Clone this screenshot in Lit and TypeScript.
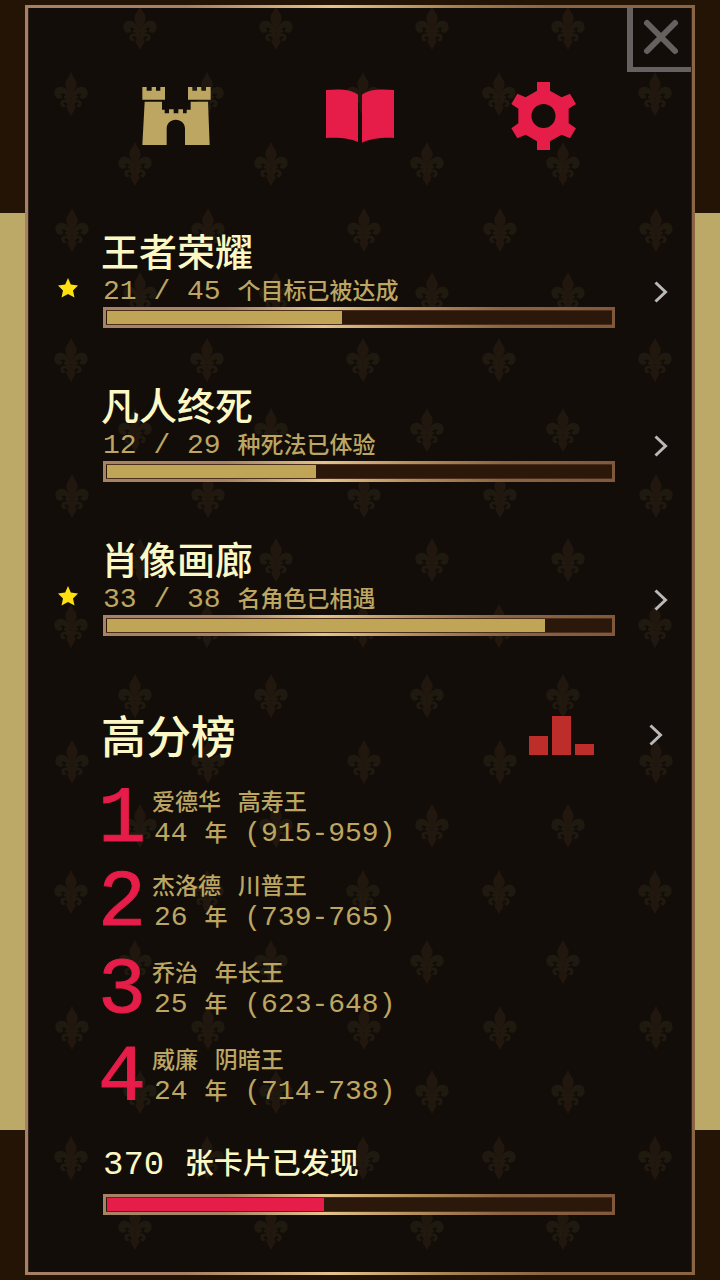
import { LitElement, html, css, svg, nothing } from "lit";
import { customElement, property } from "lit/decorators.js";

interface Goal {
  title: string;
  done: number;
  total: number;
  caption: string;
  starred: boolean;
}

interface Reign {
  king: string;
  epithet: string;
  years: number;
  from: number;
  to: number;
}

const GOALS: Goal[] = [
  { title: "王者荣耀", done: 21, total: 45, caption: "个目标已被达成", starred: true },
  { title: "凡人终死", done: 12, total: 29, caption: "种死法已体验", starred: false },
  { title: "肖像画廊", done: 33, total: 38, caption: "名角色已相遇", starred: true },
];

const REIGNS: Reign[] = [
  { king: "爱德华", epithet: "高寿王", years: 44, from: 915, to: 959 },
  { king: "杰洛德", epithet: "川普王", years: 26, from: 739, to: 765 },
  { king: "乔治", epithet: "年长王", years: 25, from: 623, to: 648 },
  { king: "威廉", epithet: "阴暗王", years: 24, from: 714, to: 738 },
];

const chevron = html`<svg width="14" height="22" viewBox="0 0 14 22" aria-hidden="true">
  <path d="M1.500 1.500 11.500 11 1.500 20.500" fill="none" stroke="#b9b9b9" stroke-width="3" />
</svg>`;

// Spots of the fleurs-de-lis inside one 292 x 266 tile.
const FLEURS = [
  [111, 24], [247, 24], [42, 90], [178, 90],
  [106, 160], [242, 160], [43, 226], [179, 226],
];

@customElement("fleur-backdrop")
export class FleurBackdrop extends LitElement {
  static styles = css`
    :host { display: block; }
    svg { display: block; width: 100%; height: 100%; }
  `;
  render() {
    return html`<svg aria-hidden="true">
      <defs>
        <g id="half">
          <path d="M1 2.500C2 -2 5 -6 9 -7C14 -8 17 -4 16.500 0C16 4 12 6 9.500 4C8 2.500 9 0.500 11 1C10 -1.500 6 -1 5 2C4.500 3.500 4 5 5.500 6C8 5 11 7 10.500 10C10 14 6 14 5 11C6.500 11.500 8 10.500 7.500 9C6 7 3 9 3 12L1 8Z" />
        </g>
        <g id="fleur">
          <g fill="#1f190f">
            <use href="#half" />
            <use href="#half" transform="scale(-1 1)" />
            <path d="M-7 2H7V4.500H-7Z" />
          </g>
          <g fill="#21170f">
            <path d="M0 -22C2 -16 6 -14 5.500 -9C5 -5 2 -3 1.500 4H-1.500C-2 -3 -5 -5 -5.500 -9C-6 -14 -2 -16 0 -22Z" />
            <path d="M-1.500 5H1.500C1.500 10 4 11 4.500 13C4 16 1.500 18 0 22C-1.500 18 -4 16 -4.500 13C-4 11 -1.500 10 -1.500 5Z" />
          </g>
        </g>
        <pattern id="tile" y="-4" width="292" height="266" patternUnits="userSpaceOnUse">
          ${FLEURS.map(([x, y]) => svg`<use href="#fleur" x=${x} y=${y} />`)}
        </pattern>
      </defs>
      <rect width="100%" height="100%" fill="url(#tile)" />
    </svg>`;
  }
}

@customElement("meter-bar")
export class MeterBar extends LitElement {
  @property({ type: Number }) value = 0;
  @property() label = "";
  @property() tone = "gold";

  static styles = css`
    :host { display: block; }
    .frame {
      padding: 3px;
      background: linear-gradient(90deg, #a68362 0%, #a68362 24%, #e3c48c 43%, #b08a58 62%, #8b6542 78%, #80593c 100%);
    }
    .track {
      box-sizing: border-box;
      height: 15px;
      padding: 0 1px;
      background: #2c180b;
      border: 1px solid #4b2f1c;
      border-width: 1px 0;
    }
    .fill { height: 13px; background: #c1a556; }
    .crimson { background: #e61c49; }
  `;
  render() {
    return html`<div class="frame" role="progressbar" aria-label=${this.label} aria-valuenow=${Math.round(this.value)}>
      <div class="track"><div class="fill ${this.tone}" style="width:${this.value}%"></div></div>
    </div>`;
  }
}

@customElement("app-root")
export class AppRoot extends LitElement {
  static styles = css`
    :host {
      display: flex;
      box-sizing: border-box;
      min-height: 100vh;
      padding: 5px 25px;
      background: linear-gradient(#241405 213px, #bca867 213px, #bca867 calc(100% - 150px), #241405 calc(100% - 150px));
      font-family: "Noto Sans CJK SC", sans-serif;
      font-weight: 500;
      color: #bca662;
    }
    .frame {
      flex: 1;
      display: flex;
      padding: 3px;
      background: linear-gradient(90deg, #a68064 0%, #a68064 24%, #e3c48c 46%, #a58050 64%, #8b6444 78%, #8b6444 100%);
    }
    .panel {
      position: relative;
      flex: 1;
      display: flex;
      flex-direction: column;
      background: #120d08;
      border: 1px solid #33231a;
      border-width: 0 1px;
    }
    .backdrop { position: absolute; inset: 0; }
    .close {
      position: absolute;
      top: 0;
      right: 0;
      box-sizing: border-box;
      width: 64px;
      height: 64px;
      padding: 0;
      background: #120d08;
      border: solid #666161;
      border-width: 0 0 5px 6px;
      border-radius: 0;
    }
    .close svg, .tab svg, .mark svg, .arrow svg, .chart { display: block; }
    .body { position: relative; padding: 74px 23px 56px 29px; }
    .tabs { display: flex; justify-content: space-between; padding: 0 90px 0 84px; margin-bottom: 78px; }
    .tab { width: 68px; height: 68px; padding: 0; border: 0; background: none; color: #e61c49; }
    .current { color: #bca662; }
    a { color: inherit; text-decoration: none; }
    .goal {
      display: grid;
      grid-template-columns: 45px 1fr 53px;
      height: 100px;
      margin-bottom: 54px;
    }
    .mark { padding-top: 50px; }
    .arrow { padding-top: 53px; justify-self: end; }
    h2 { margin: 0 0 0 -2px; font-weight: 500; font-size: 38px; line-height: 44px; color: #fbf8c5; }
    .line { margin: 0; font-size: 23px; line-height: 31px; white-space: pre; }
    .caption { line-height: 35px; }
    .line, .caption { overflow: visible; }
    .num { font-family: "Liberation Mono", monospace; font-weight: 400; font-size: 28px; line-height: 1px; }
    .scores {
      display: flex;
      align-items: center;
      margin: 0 5px 5px 45px;
      height: 90px;
    }
    .scores h2 { flex: 1; font-size: 45px; line-height: 60px; }
    .scores .arrow { padding: 0; margin-left: 55px; }
    ol { list-style: none; margin: 0 0 0 40px; padding: 0; }
    li { display: flex; gap: 6px; height: 62px; margin-bottom: 25px; }
    li:first-child { margin-bottom: 22px; }
    .rank {
      width: 48px;
      font: 400 80px/70px "Liberation Mono", monospace;
      color: #e61c49;
      -webkit-text-stroke: 1px #e61c49;
    }
    .years { padding-left: 2px; }
    .found { margin: 36px 53px 0 45px; }
    .cards { margin: 0 0 13px; height: 40px; font-size: 29px; line-height: 40px; color: #fbf8c5; white-space: pre; }
    .cards .num { font-size: 34px; }
  `;

  private goal(g: Goal) {
    return html`<a class="goal" href="#">
      <span class="mark">
        ${g.starred
          ? html`<svg width="20" height="20" viewBox="0 0 20 20" aria-hidden="true">
              <path d="M10 0 12.800 6.500 20 7.500 15 12.500 16.500 19.500 10 16 3.500 19.500 5 12.500 0 7.500 7.200 6.500Z" fill="#ffdf10" />
            </svg>`
          : nothing}
      </span>
      <div>
        <h2>${g.title}</h2>
        <p class="line caption"><span class="num">${g.done} / ${g.total} </span>${g.caption}</p>
        <meter-bar .value=${(g.done / g.total) * 100} .label=${g.title}></meter-bar>
      </div>
      <span class="arrow">${chevron}</span>
    </a>`;
  }

  private reign(r: Reign, i: number) {
    return html`<li>
      <span class="rank">${i + 1}</span>
      <div>
        <p class="line">${r.king}<span class="num"> </span>${r.epithet}</p>
        <p class="line years"><span class="num">${r.years} </span>年<span class="num"> (${r.from}-${r.to})</span></p>
      </div>
    </li>`;
  }

  render() {
    return html`<div class="frame"><main class="panel">
      <fleur-backdrop class="backdrop"></fleur-backdrop>
      <div class="body">
        <nav class="tabs">
          <button class="tab current" aria-label="城堡">
            <svg width="68" height="68" viewBox="426 246 204 204" overflow="visible" fill="currentColor">
              <path d="M427 261H440V272H455V261H468V272H481V261H495V299H427Z" />
              <path d="M564 261H577V272H591V261H604V272H618V261H632V299H564Z" />
              <path d="M434 305H486V329H494V340H507V328H521V340H535V328H549V340H560V329H572V305H624L629 435H555V386C555 370 543 359 527 359C512 359 500 370 500 386V435H427Z" />
            </svg>
          </button>
          <button class="tab" aria-label="书">
            <svg width="68" height="68" viewBox="978 246 204 204" fill="currentColor">
              <path d="M978 270C1015 267 1050 266 1074 284V426C1050 416 1020 412 978 414Z" />
              <path d="M1182 270C1145 267 1110 266 1086 284V428C1110 418 1140 412 1182 414Z" />
            </svg>
          </button>
          <button class="tab" aria-label="设置">
            <svg width="68" height="68" viewBox="450 246 204 204" fill="currentColor">
              <path fill-rule="evenodd" d="M531 246H570V272L605 292 630 281 648 312 626 326V370L648 385 630 415 605 404 570 424V450H531V424L497 404 472 415 454 385 475 370V326L454 312 472 281 497 292 531 272ZM550.500 312A36 36 0 1 0 550.500 384A36 36 0 1 0 550.500 312Z" />
            </svg>
          </button>
        </nav>
        ${GOALS.map((g) => this.goal(g))}
        <a class="scores" href="#">
          <h2>高分榜</h2>
          <svg class="chart" width="65" height="39" viewBox="0 0 65 39" fill="#bd2d2a" aria-hidden="true">
            <path d="M0 20H19V39H0ZM23 0H42V39H23ZM46 28H65V39H46Z" />
          </svg>
          <span class="arrow">${chevron}</span>
        </a>
        <ol>${REIGNS.map((r, i) => this.reign(r, i))}</ol>
        <section class="found">
          <p class="cards"><span class="num">370 </span>张卡片已发现</p>
          <meter-bar .value=${43} tone="crimson" label="张卡片已发现"></meter-bar>
        </section>
      </div>
      <button class="close" aria-label="关闭">
        <svg width="58" height="59" viewBox="0 0 58 59" aria-hidden="true">
          <path d="M14 15 42 43M42 15 14 43" stroke="#666161" stroke-width="6" stroke-linecap="round" />
        </svg>
      </button>
    </main></div>`;
  }
}
